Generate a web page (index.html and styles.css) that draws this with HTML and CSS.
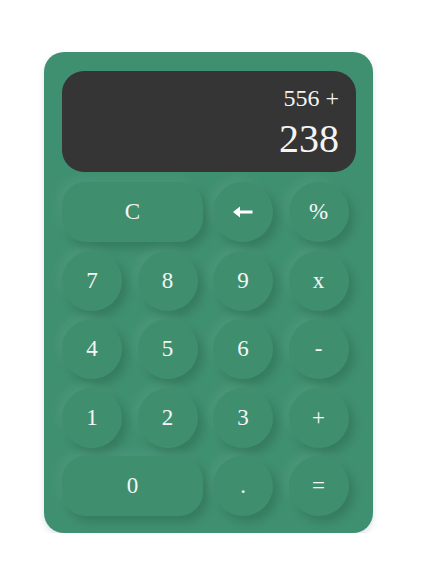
FILE: index.html
```html
<!DOCTYPE html>
<html>
<head>
<meta charset="utf-8">
<link rel="stylesheet" href="styles.css">
</head>
<body>
<div class="calc">
  <div class="display">
    <div class="prev">556 +</div>
    <div class="cur">238</div>
  </div>
  <div class="keys">
    <button class="key wide">C</button>
    <button class="key"><svg width="20" height="12" viewBox="0 0 20 12"><path d="M0 6 L7 0.5 L7 4.6 L19.5 4.6 L19.5 7.4 L7 7.4 L7 11.5 Z" fill="#fff"/></svg></button>
    <button class="key">%</button>
    <button class="key">7</button>
    <button class="key">8</button>
    <button class="key">9</button>
    <button class="key">x</button>
    <button class="key">4</button>
    <button class="key">5</button>
    <button class="key">6</button>
    <button class="key">-</button>
    <button class="key">1</button>
    <button class="key">2</button>
    <button class="key">3</button>
    <button class="key">+</button>
    <button class="key wide">0</button>
    <button class="key">.</button>
    <button class="key">=</button>
  </div>
</div>
</body>
</html>
```
FILE: styles.css
```css
html, body {
  margin: 0;
  padding: 0;
  background: #ffffff;
}
body {
  font-family: "Liberation Serif", "DejaVu Serif", serif;
}
.calc {
  margin: 52px 0 0 44px;
  width: 329px;
  height: 481px;
  box-sizing: border-box;
  padding: 19px 17px 17px 18px;
  background: #3f9070;
  border-radius: 20px;
  box-shadow: 0 3px 6px rgba(60, 90, 120, 0.18);
  display: flex;
  flex-direction: column;
  gap: 10px;
}
.display {
  height: 101px;
  background: #353535;
  border-radius: 22px;
  box-sizing: border-box;
  padding: 12px 17px 0 0;
  display: flex;
  flex-direction: column;
  align-items: flex-end;
  color: #f4f4f4;
}
.prev {
  font-size: 24px;
  line-height: 30px;
}
.cur {
  font-size: 40px;
  line-height: 44px;
  margin-top: 4px;
}
.keys {
  display: grid;
  grid-template-columns: repeat(4, 60px);
  grid-auto-rows: 60px;
  column-gap: 15.5px;
  row-gap: 8.5px;
}
.key {
  border: none;
  padding: 0;
  margin: 0;
  width: 60px;
  height: 60px;
  border-radius: 30px;
  background: #3f8f6f;
  color: #f6f6f6;
  font-family: "Liberation Serif", "DejaVu Serif", serif;
  font-size: 23px;
  display: flex;
  align-items: center;
  justify-content: center;
  box-shadow: 5px 6px 10px rgba(0, 0, 0, 0.15), -5px -5px 10px rgba(255, 255, 255, 0.06);
}
.key.wide {
  grid-column: span 2;
  width: 141px;
  border-radius: 24px;
}
```
